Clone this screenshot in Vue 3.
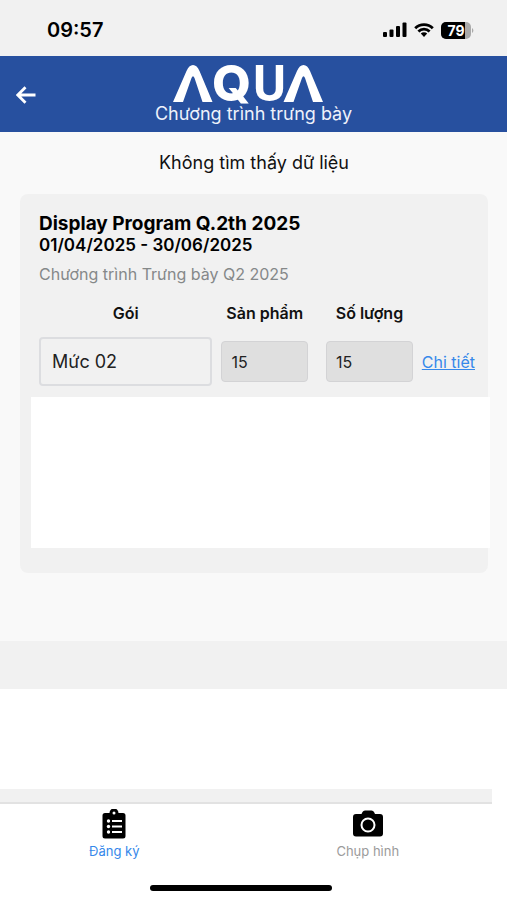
<script setup>
import { ref } from 'vue'

const packages = ['Mức 02']
const selected = ref('Mức 02')
const products = ref('15')
const quantity = ref('15')
</script>

<template>
  <div class="screen">
    <div class="status">
      <time class="clock">09:57</time>
      <div class="indicators">
        <svg width="24" height="16" viewBox="0 0 24 16" aria-hidden="true">
          <rect x="0" y="10" width="4" height="5" rx="1" />
          <rect x="6.500" y="7.500" width="4" height="7.500" rx="1" />
          <rect x="13" y="4" width="4" height="11" rx="1" />
          <rect x="19.500" y="0.500" width="4" height="14.500" rx="1" />
        </svg>
        <svg width="20" height="16" viewBox="0 0 20 16" aria-hidden="true">
          <path d="M1.200 6.200a12.500 12.500 0 0 1 17.600 0M4.400 9.400a8 8 0 0 1 11.200 0" fill="none" stroke="#000" stroke-width="2.800" />
          <path d="M6.800 11.600a4.600 4.600 0 0 1 6.400 0L10 15z" />
        </svg>
        <svg width="33" height="17" viewBox="0 0 33 17" aria-hidden="true">
          <rect x="0" y="0" width="30" height="17" rx="5" fill="#aaa" />
          <path d="M5 0H24V17H5a5 5 0 0 1-5-5V5a5 5 0 0 1 5-5z" />
          <path d="M31 6a3 3 0 0 1 0 5z" fill="#aaa" />
          <text class="level" x="15" y="14" text-anchor="middle">79</text>
        </svg>
      </div>
    </div>

    <header class="header">
      <button class="back" type="button" aria-label="Back">
        <svg width="20" height="18" viewBox="0 0 20 18" aria-hidden="true">
          <path d="M19.500 9H2M9.500 1.200L1.800 9l7.700 7.800" fill="none" stroke="#fff" stroke-width="2.800" />
        </svg>
      </button>
      <div class="brand">
        <svg class="logo" width="150" height="40" viewBox="0 0 150 40" role="img" aria-label="AQUA">
          <g fill="#fff">
            <path d="M0 38L13.500 7Q16 1 20 1Q24 1 26.500 7L39.500 38H29.500L21.500 14Q20 10.500 18.500 14L10 38z" />
            <path d="M110.500 38L124 7Q126.500 1 130.500 1Q134.500 1 137 7L150 38H140L132 14Q130.500 10.500 129 14L120.500 38z" />
          </g>
          <text class="mark" x="39" y="37">Q</text>
          <text class="mark narrow" x="80" y="37">U</text>
        </svg>
        <h1 class="title">Chương trình trưng bày</h1>
      </div>
    </header>

    <main class="content">
      <p class="empty">Không tìm thấy dữ liệu</p>
      <section class="card">
        <h2 class="name">Display Program Q.2th 2025</h2>
        <p class="dates">01/04/2025 - 30/06/2025</p>
        <p class="desc">Chương trình Trưng bày Q2 2025</p>
        <form class="fields" @submit.prevent>
          <label class="label package" for="package">Gói</label>
          <label class="label products" for="products">Sản phẩm</label>
          <label class="label quantity" for="quantity">Số lượng</label>
          <select id="package" v-model="selected" class="select package">
            <option v-for="p in packages" :key="p">{{ p }}</option>
          </select>
          <input id="products" v-model="products" class="input products" disabled />
          <input id="quantity" v-model="quantity" class="input quantity" disabled />
          <a class="detail" href="#">Chi tiết</a>
        </form>
        <div class="panel"></div>
      </section>
    </main>
    <div class="band"></div>
    <div class="blank"></div>
    <div class="strip"></div>

    <nav class="tabs">
      <a class="tab active" href="#">
        <svg width="24" height="30" viewBox="0 0 24 30" aria-hidden="true">
          <path d="M3 4H7.500a4.500 4.500 0 0 1 9 0H21a2.500 2.500 0 0 1 2.500 2.500V27a2.500 2.500 0 0 1-2.500 2.500H3A2.500 2.500 0 0 1 .5 27V6.500A2.500 2.500 0 0 1 3 4z" />
          <circle cx="12" cy="4" r="1.500" fill="#fff" />
          <path d="M10 12h10M10 17.500h10M10 23h10" stroke="#fff" stroke-width="2" />
          <g fill="#fff"><circle cx="6.500" cy="12" r="1.700" /><circle cx="6.500" cy="17.500" r="1.700" /><circle cx="6.500" cy="23" r="1.700" /></g>
        </svg>
        <span>Đăng ký</span>
      </a>
      <a class="tab" href="#">
        <svg width="30" height="30" viewBox="0 0 30 30" aria-hidden="true">
          <path d="M3 5H8.500L9.500 3Q10.200 1.500 12 1.500H18.500Q20.300 1.500 21 3L22 5H27a3 3 0 0 1 3 3V24.500a3 3 0 0 1-3 3H3a3 3 0 0 1-3-3V8a3 3 0 0 1 3-3z" />
          <circle cx="15" cy="16" r="6.500" fill="none" stroke="#fff" stroke-width="2" />
        </svg>
        <span>Chụp hình</span>
      </a>
    </nav>
    <div class="home"></div>
  </div>
</template>

<style>
body {
  margin: 0;
  background: #fff;
}
</style>

<style scoped>
.screen {
  min-height: 100vh;
  box-sizing: border-box;
  display: flex;
  flex-direction: column;
  background: #fff;
  color: #111;
  font-family: Inter, "Liberation Sans", sans-serif;
}
h1, h2, p {
  margin: 0;
}
svg {
  display: block;
}
.status {
  display: flex;
  align-items: center;
  justify-content: space-between;
  height: 56px;
  padding: 4px 33px 0 47px;
  box-sizing: border-box;
  background: #f1f1f1;
}
.clock {
  font-size: 20px;
  line-height: 24px;
  font-weight: 600;
  color: #000;
}
.indicators {
  display: flex;
  align-items: center;
  gap: 7px;
}
.level {
  font-size: 14px;
  font-weight: 700;
  fill: #fff;
}
.header {
  display: grid;
  grid-template-columns: 52px 1fr 52px;
  align-items: center;
  height: 76px;
  background: #27509f;
}
.back {
  padding: 2px 16px 0;
  border: 0;
  background: none;
}
.brand {
  display: flex;
  flex-direction: column;
  align-items: center;
}
.logo {
  margin-right: 12px;
  overflow: visible;
}
.mark {
  font-size: 50px;
  font-weight: 800;
  fill: #fff;
}
.narrow {
  font-family: Roboto, "Liberation Sans", sans-serif;
  font-weight: 700;
}
.title {
  font-size: 18px;
  line-height: 20px;
  font-weight: 400;
  color: #eef2fb;
}
.content {
  padding: 20px 19px 68px 20px;
  background: #f9f9f9;
}
.empty {
  font-size: 18px;
  line-height: 22px;
  text-align: center;
}
.card {
  margin-top: 20px;
  padding: 19px 0 25px 19px;
  border-radius: 8px;
  background: #f1f1f1;
}
.name {
  font-size: 19px;
  line-height: 22px;
  font-weight: 700;
  color: #000;
}
.dates {
  font-size: 17px;
  line-height: 20px;
  font-weight: 600;
  color: #000;
}
.desc {
  margin-top: 9px;
  font-size: 16px;
  line-height: 20px;
  color: #858889;
}
.fields {
  display: grid;
  grid-template-columns: 2fr 1fr 0 1fr auto;
  column-gap: 9px;
  row-gap: 14px;
  align-items: center;
  margin-top: 19px;
  padding-right: 13px;
}
.package {
  grid-column: 1;
}
.products {
  grid-column: 2;
}
.quantity {
  grid-column: 4;
}
.label {
  font-size: 16px;
  line-height: 20px;
  font-weight: 600;
  text-align: center;
  white-space: nowrap;
}
.select,
.input {
  box-sizing: border-box;
  width: 100%;
  min-width: 0;
  margin: 0;
  border: 1px solid #d3d3d5;
  border-radius: 4px;
  font-family: inherit;
  color: #222;
}
.select {
  height: 49px;
  padding: 0 11px;
  border: 2px solid #dcdde0;
  appearance: none;
  background: #f1f1f1;
  font-size: 18px;
}
.input {
  height: 41px;
  padding: 0 9px;
  background: #dfdfdf;
  font-size: 16px;
}
.detail {
  grid-column: 5;
  font-size: 16px;
  line-height: 20px;
  color: #3588ea;
}
.panel {
  height: 151px;
  margin: 11px -2px 0 -8px;
  background: #fff;
}
.band {
  height: 48px;
  background: #f1f1f1;
}
.blank {
  flex: 1;
  min-height: 40px;
}
.strip {
  height: 13px;
  margin-right: 15px;
  border-bottom: 2px solid #e2e2e2;
  background: #f1f1f1;
}
.tabs {
  display: grid;
  grid-template-columns: 1fr 1fr;
  padding-top: 5px;
}
.tab {
  display: flex;
  flex-direction: column;
  align-items: center;
  gap: 4px;
  padding-right: 25px;
  font-size: 13px;
  line-height: 16px;
  color: #9b9b9b;
  text-decoration: none;
}
.tab svg {
  fill: #000;
}
.active {
  color: #3588ea;
}
.home {
  align-self: center;
  width: 36%;
  height: 6px;
  margin: 26px 25px 9px 0;
  border-radius: 3px;
  background: #000;
}
</style>
